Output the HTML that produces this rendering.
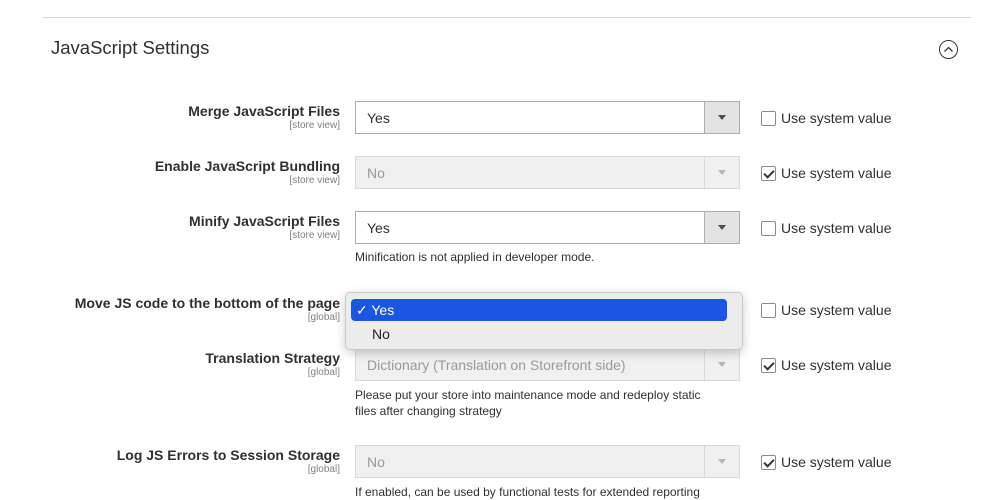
<!DOCTYPE html>
<html><head><meta charset="utf-8"><style>
body{margin:0;width:992px;height:496px;overflow:hidden;background:#fff;font-family:"Liberation Sans",sans-serif;color:#303030;position:relative}
.a{position:absolute}
.hr{left:43px;top:17px;width:928px;height:1px;background:#d6d6d6}
.title{left:51px;top:37px;font-size:18.5px;color:#303030}
.circ{left:939px;top:40px;width:17px;height:17px;border:1px solid #333;border-radius:50%}
.lab{right:652px;text-align:right;font-size:14px;font-weight:bold;color:#303030;white-space:nowrap}
.sc{right:652px;font-size:10px;color:#808080;text-align:right}
.sel{left:355px;width:383px;height:31px;border:1px solid #adadad;background:#fff;font-size:14px}
.sel span{position:absolute;left:11px;top:8px}
.sel i{position:absolute;right:0;top:0;width:34px;height:31px;background:#e3e3e3;border-left:1px solid #adadad}
.sel i:after{content:"";position:absolute;left:13px;top:13px;border-left:4px solid transparent;border-right:4px solid transparent;border-top:5px solid #514943}
.sel.d{background:#f0f0f0;border-color:#d9d9d9;color:#999}
.sel.d i{background:#f0f0f0;border-left-color:#d9d9d9}
.sel.d i:after{border-top-color:#b5b5b5}
.cb{left:761px;width:13px;height:13px;border:1px solid #8a8a8a;border-radius:2px;background:#fff}
.cb.c:after{content:"";position:absolute;left:4px;top:1px;width:4px;height:8px;border:solid #333;border-width:0 2px 2px 0;transform:rotate(45deg)}
.ut{left:781px;font-size:14px;color:#303030}
.note{left:355px;font-size:12px;color:#303030;line-height:16px}
.dd{left:345px;top:292px;width:396px;height:56px;background:#ececec;border:1px solid #c8c8c8;border-radius:5px;box-shadow:0 3px 10px rgba(0,0,0,.2);font-size:14px}
.dd .y{position:absolute;left:5px;top:6px;width:376px;height:22px;background:#1b56e3;border-radius:4px;color:#fff}
.dd .y span{position:absolute;left:5px;top:3px}
.dd .n{position:absolute;left:26px;top:33px;color:#222}
</style></head><body>
<div class="a hr"></div>
<div class="a title">JavaScript Settings</div>
<div class="a circ"><svg width="17" height="17" style="position:absolute;left:0;top:0"><path d="M4.5 10.5L8.5 6.5L12.5 10.5" fill="none" stroke="#333" stroke-width="1.3"/></svg></div>

<div class="a lab" style="top:103px">Merge JavaScript Files</div>
<div class="a sc" style="top:120px">[store view]</div>
<div class="a sel" style="top:101px"><span>Yes</span><i></i></div>
<div class="a cb" style="top:111px"></div><div class="a ut" style="top:110px">Use system value</div>

<div class="a lab" style="top:158px">Enable JavaScript Bundling</div>
<div class="a sc" style="top:175px">[store view]</div>
<div class="a sel d" style="top:156px"><span>No</span><i></i></div>
<div class="a cb c" style="top:166px"></div><div class="a ut" style="top:165px">Use system value</div>

<div class="a lab" style="top:213px">Minify JavaScript Files</div>
<div class="a sc" style="top:230px">[store view]</div>
<div class="a sel" style="top:211px"><span>Yes</span><i></i></div>
<div class="a cb" style="top:221px"></div><div class="a ut" style="top:220px">Use system value</div>
<div class="a note" style="top:249px">Minification is not applied in developer mode.</div>

<div class="a lab" style="top:295px">Move JS code to the bottom of the page</div>
<div class="a sc" style="top:312px">[global]</div>
<div class="a sel" style="top:293px;border-color:#1979c3"><i></i></div>
<div class="a cb" style="top:303px"></div><div class="a ut" style="top:302px">Use system value</div>

<div class="a lab" style="top:350px">Translation Strategy</div>
<div class="a sc" style="top:367px">[global]</div>
<div class="a sel d" style="top:348px"><span>Dictionary (Translation on Storefront side)</span><i></i></div>
<div class="a cb c" style="top:358px"></div><div class="a ut" style="top:357px">Use system value</div>
<div class="a note" style="top:387px">Please put your store into maintenance mode and redeploy static<br>files after changing strategy</div>

<div class="a lab" style="top:447px">Log JS Errors to Session Storage</div>
<div class="a sc" style="top:464px">[global]</div>
<div class="a sel d" style="top:445px"><span>No</span><i></i></div>
<div class="a cb c" style="top:455px"></div><div class="a ut" style="top:454px">Use system value</div>
<div class="a note" style="top:484px">If enabled, can be used by functional tests for extended reporting</div>

<div class="a dd"><div class="y"><span>✓ Yes</span></div><div class="n">No</div></div>
</body></html>
